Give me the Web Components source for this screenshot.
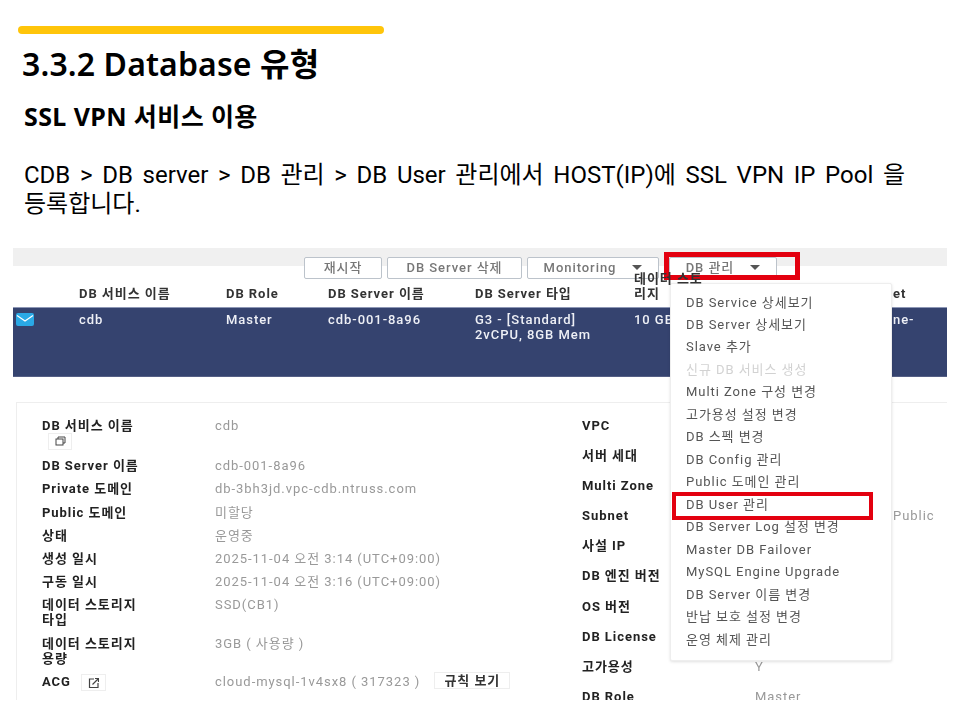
<!DOCTYPE html>
<html lang="ko">
<head>
<meta charset="utf-8">
<title>3.3.2 Database 유형</title>
<style>
    html, body { margin: 0; background: #fff; }
    body { width: 960px; height: 720px; overflow: hidden; font-family: "Noto Sans", "Noto Sans CJK KR", sans-serif; }
</style>
</head>
<body>
<slide-head title-text="3.3.2 Database 유형" sub-text="SSL VPN 서비스 이용">CDB &gt; DB server &gt; DB 관리 &gt; DB User 관리에서 HOST(IP)에 SSL VPN IP Pool 을<br>등록합니다.</slide-head>

<db-console>
    <action-button slot="actions" style="width:78px">재시작</action-button>
    <action-button slot="actions" style="width:135px">DB Server 삭제</action-button>
    <action-button slot="actions" style="width:132px" caret>Monitoring</action-button>
    <action-button slot="actions" style="width:108px;margin-left:5px" caret>DB 관리</action-button>

    <detail-row slot="left" label="DB 서비스 이름" icon="copy" stacked>cdb</detail-row>
    <detail-row slot="left" label="DB Server 이름">cdb-001-8a96</detail-row>
    <detail-row slot="left" label="Private 도메인">db-3bh3jd.vpc-cdb.ntruss.com</detail-row>
    <detail-row slot="left" label="Public 도메인">미할당</detail-row>
    <detail-row slot="left" label="상태">운영중</detail-row>
    <detail-row slot="left" label="생성 일시">2025-11-04 오전 3:14 (UTC+09:00)</detail-row>
    <detail-row slot="left" label="구동 일시">2025-11-04 오전 3:16 (UTC+09:00)</detail-row>
    <detail-row slot="left" label="데이터 스토리지 타입">SSD(CB1)</detail-row>
    <detail-row slot="left" label="데이터 스토리지 용량">3GB ( 사용량 )</detail-row>
    <detail-row slot="left" label="ACG" icon="open">cloud-mysql-1v4sx8 ( 317323 )<small-button>규칙 보기</small-button></detail-row>

    <detail-row slot="right" wide label="VPC"></detail-row>
    <detail-row slot="right" wide label="서버 세대"></detail-row>
    <detail-row slot="right" wide label="Multi Zone"></detail-row>
    <detail-row slot="right" wide label="Subnet"><span style="margin-left:138px">Public</span></detail-row>
    <detail-row slot="right" wide label="사설 IP"></detail-row>
    <detail-row slot="right" wide label="DB 엔진 버전"></detail-row>
    <detail-row slot="right" wide label="OS 버전"></detail-row>
    <detail-row slot="right" wide label="DB License"></detail-row>
    <detail-row slot="right" wide label="고가용성">Y</detail-row>
    <detail-row slot="right" wide label="DB Role">Master</detail-row>

    <drop-menu slot="overlay">
        <menu-entry>DB Service 상세보기</menu-entry>
        <menu-entry>DB Server 상세보기</menu-entry>
        <menu-entry>Slave 추가</menu-entry>
        <menu-entry disabled>신규 DB 서비스 생성</menu-entry>
        <menu-entry>Multi Zone 구성 변경</menu-entry>
        <menu-entry>고가용성 설정 변경</menu-entry>
        <menu-entry>DB 스펙 변경</menu-entry>
        <menu-entry>DB Config 관리</menu-entry>
        <menu-entry>Public 도메인 관리</menu-entry>
        <menu-entry>DB User 관리</menu-entry>
        <menu-entry>DB Server Log 설정 변경</menu-entry>
        <menu-entry>Master DB Failover</menu-entry>
        <menu-entry>MySQL Engine Upgrade</menu-entry>
        <menu-entry>DB Server 이름 변경</menu-entry>
        <menu-entry>반납 보호 설정 변경</menu-entry>
        <menu-entry>운영 체제 관리</menu-entry>
    </drop-menu>

    <red-mark slot="overlay" style="left:651px;top:4px;width:136px;height:28px;border-width:5px"></red-mark>
    <red-mark slot="overlay" style="left:659px;top:244px;width:201px;height:28px"></red-mark>
</db-console>

<script>
class SlideHead extends HTMLElement {
    constructor() {
        super();
        this.attachShadow({ mode: 'open' }).innerHTML = `
            <style>
                :host { display: block; height: 248px; box-sizing: border-box; padding-top: 26px; color: #000; font-family: "Noto Sans", "Noto Sans CJK KR", sans-serif; }
                .bar { width: 366px; height: 8px; margin-left: 18px; background: #ffc50a; border-radius: 4px; }
                h1 { margin: 0; padding: 10px 0 0 22px; font-size: 32px; line-height: 40px; font-weight: 600; letter-spacing: .12px; }
                h2 { margin: 0; padding: 17px 0 0 24px; font-size: 25px; line-height: 30px; font-weight: 700; letter-spacing: .4px; }
                p { margin: 0; padding: 30px 0 0 24px; font: 24px/29px Roboto, "Noto Sans CJK KR", sans-serif; word-spacing: 3.7px; }
            </style>
            <div class="bar"></div>
            <h1></h1>
            <h2></h2>
            <p><slot></slot></p>
        `;
        this.shadowRoot.querySelector('h1').textContent = this.getAttribute('title-text');
        this.shadowRoot.querySelector('h2').textContent = this.getAttribute('sub-text');
    }
}

class DbConsole extends HTMLElement {
    constructor() {
        super();
        this.attachShadow({ mode: 'open' }).innerHTML = `
            <style>
                :host {
                    display: block; position: relative; width: 934px; height: 452px; margin-left: 13px; overflow: hidden;
                    background: #fff; font: 500 13px/15px Roboto, "Noto Sans CJK KR", sans-serif; letter-spacing: .95px;
                    filter: blur(.35px);
                }
                .toolbar { height: 31px; box-sizing: border-box; padding: 9px 0 0 291px; display: flex; gap: 5px; background: linear-gradient(#f0f0f0 18px, #fff 18px); }
                .cols { display: grid; grid-template-columns: 66px 147px 102px 147px 159px 259px 1fr; }
                .head { height: 28px; box-sizing: border-box; padding-bottom: 6px; grid-template-rows: 22px; align-items: end; color: #333; font-weight: 700; }
                .head div:nth-child(6) { position: relative; z-index: 1; white-space: nowrap; }
                .row { height: 70px; box-sizing: border-box; padding-top: 4px; background: #35436f; color: #eef0f6; border-top: 1px solid #8d97b5; border-bottom: 1px solid #555f85; }
                .check { width: 18px; height: 13px; margin: 1px 0 0 3px; display: block; }
                .card { margin: 25px 0 0 3px; height: 330px; box-sizing: border-box; padding: 15px 0 0 25px; border: 1px solid #eee; border-width: 1px 0 0 1px; display: grid; grid-template-columns: 540px 1fr; }
                .col { display: flex; flex-direction: column; }
                .col.left { gap: 8.2px; }
                .col.right { gap: 15.1px; }
            </style>
            <div class="toolbar"><slot name="actions"></slot></div>
            <div class="cols head">
                <div></div><div>DB 서비스 이름</div><div>DB Role</div><div>DB Server 이름</div><div>DB Server 타입</div><div>데이터 스토<br>리지</div><div>et</div>
            </div>
            <div class="cols row">
                <div><svg class="check" viewBox="0 0 18 13"><rect width="18" height="13" rx="2" fill="#2aa9e6"/><path d="M1 2.500 9 8l8-5.500" fill="none" stroke="#fff" stroke-width="1.200"/></svg></div>
                <div>cdb</div><div>Master</div><div>cdb-001-8a96</div><div>G3 - [Standard]<br>2vCPU, 8GB Mem</div><div>10 GB</div><div>ne-</div>
            </div>
            <div class="card">
                <div class="col left"><slot name="left"></slot></div>
                <div class="col right"><slot name="right"></slot></div>
            </div>
            <slot name="overlay"></slot>
        `;
    }
}

class ActionButton extends HTMLElement {
    constructor() {
        super();
        this.attachShadow({ mode: 'open' }).innerHTML = `
            <style>
                :host { display: flex; align-items: center; justify-content: center; gap: 16px; height: 22px; box-sizing: border-box; padding-bottom: 2px; background: #fff; border: 1px solid #bcc3cb; border-radius: 2px; color: #777; position: relative; }
                i { display: none; width: 0; height: 0; border: 5px solid transparent; border-top: 5px solid #555; border-bottom: 0; }
                :host([caret]) i { display: block; }
            </style>
            <slot></slot><i></i>
        `;
    }
}

class DetailRow extends HTMLElement {
    constructor() {
        super();
        const icon = this.getAttribute('icon');
        const glyphs = {
            copy: '<rect x="1" y="3" width="7" height="6" fill="none" stroke="#444"/><path d="M3 3V1h7v6H8" fill="none" stroke="#444"/>',
            open: '<path d="M6 2H1.500v8.500h8.500V6" fill="none" stroke="#444" stroke-width="1.200"/><path d="M4.500 7.500 10.500 1.500M7 1.500h3.500V5" fill="none" stroke="#444" stroke-width="1.200"/>'
        };
        this.attachShadow({ mode: 'open' }).innerHTML = `
            <style>
                :host { display: grid; grid-template-columns: 173px 1fr; color: #999; font-weight: 400; }
                .label { color: #222; font-weight: 700; padding-right: 50px; word-break: keep-all; }
                :host([wide]) .label { padding-right: 0; }
                .icon { display: inline-flex; align-items: center; justify-content: center; width: 24px; height: 17px; box-sizing: border-box; border: 1px solid #eee; vertical-align: middle; }
                :host([stacked]) .icon { display: flex; margin: 0 0 0 6px; }
                :host([icon="open"]) .icon { width: 25px; margin: -2px 0 -2px 10px; }
                svg { width: 11px; height: 11px; }
            </style>
            <div class="label"><span id="text"></span>${icon ? `<span class="icon"><svg viewBox="0 0 11 11">${glyphs[icon]}</svg></span>` : ''}</div>
            <div class="value"><slot></slot></div>
        `;
        this.shadowRoot.querySelector('#text').textContent = this.getAttribute('label');
    }
}

class SmallButton extends HTMLElement {
    constructor() {
        super();
        this.attachShadow({ mode: 'open' }).innerHTML = `
            <style>
                :host { display: inline-block; width: 76px; height: 17px; box-sizing: border-box; margin: -2px 0 -2px 14px; border: 1px solid #eee; color: #333; font-weight: 700; text-align: center; line-height: 15px; vertical-align: top; }
            </style>
            <slot></slot>
        `;
    }
}

class DropMenu extends HTMLElement {
    constructor() {
        super();
        this.attachShadow({ mode: 'open' }).innerHTML = `
            <style>
                :host { position: absolute; left: 657px; top: 35px; width: 222px; box-sizing: border-box; padding: 7.500px 0 9px; background: #fff; border: 1px solid #eee; border-radius: 2px; box-shadow: 0 1px 3px rgba(0,0,0,.12); }
            </style>
            <slot></slot>
        `;
    }
}

class MenuEntry extends HTMLElement {
    constructor() {
        super();
        this.attachShadow({ mode: 'open' }).innerHTML = `
            <style>
                :host { display: block; height: 22.47px; line-height: 22.47px; padding-left: 15px; color: #555; font-weight: 400; white-space: nowrap; }
                :host([disabled]) { color: #d2d2d2; }
            </style>
            <slot></slot>
        `;
    }
}

class RedMark extends HTMLElement {
    constructor() {
        super();
        this.attachShadow({ mode: 'open' }).innerHTML = `
            <style>
                :host { position: absolute; box-sizing: border-box; border: 4px solid #e3000f; }
            </style>
        `;
    }
}

customElements.define('slide-head', SlideHead);
customElements.define('db-console', DbConsole);
customElements.define('action-button', ActionButton);
customElements.define('detail-row', DetailRow);
customElements.define('small-button', SmallButton);
customElements.define('drop-menu', DropMenu);
customElements.define('menu-entry', MenuEntry);
customElements.define('red-mark', RedMark);
</script>
</body>
</html>
